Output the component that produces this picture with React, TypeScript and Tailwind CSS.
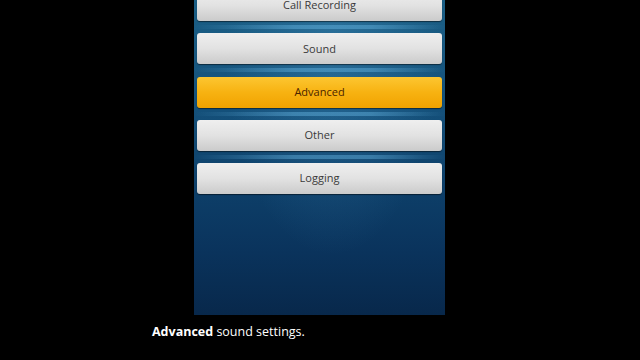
const ITEMS = [
  { label: "Call Recording", active: false },
  { label: "Sound", active: false },
  { label: "Advanced", active: true },
  { label: "Other", active: false },
  { label: "Logging", active: false },
];

export default function App() {
  return (
    <div className="w-[640px] h-[360px] bg-black overflow-hidden flex flex-col font-['Open_Sans',sans-serif]">
      <div className="ml-[194px] w-[251px] h-[315px] overflow-hidden relative bg-[linear-gradient(180deg,#1b5f86_0%,#14507a_35%,#0d3f69_60%,#0a335c_80%,#08284b_100%)]">
        <div className="absolute inset-0 bg-[radial-gradient(ellipse_at_55%_15%,rgba(90,170,220,0.25),transparent_55%)]" />
        <div className="relative flex flex-col gap-[12.3px] px-[3px] mt-[-10px]">
          {ITEMS.map((item, index) => (
            <div key={item.label} className="relative">
              {index < ITEMS.length - 1 && (
                <div className="absolute left-[-3px] right-[-3px] bottom-[-8px] h-[4px] bg-[linear-gradient(90deg,transparent,rgba(110,190,235,0.4)_40%,rgba(110,190,235,0.4)_70%,transparent)]" />
              )}
              <div
                className={
                  item.active
                    ? "relative h-[31px] rounded-[3px] flex items-center justify-center text-[11px] font-medium text-[#4a2300] bg-[linear-gradient(180deg,#fcc631_0%,#f7b211_50%,#f0a200_100%)] shadow-[0_1px_1px_rgba(0,0,0,0.5)]"
                    : "relative h-[31px] rounded-[3px] flex items-center justify-center text-[11px] font-medium text-[#3a3a3a] bg-[linear-gradient(180deg,#efefef_0%,#e2e2e2_50%,#cbcbcb_100%)] shadow-[0_1px_1px_rgba(0,0,0,0.5)]"
                }
              >
                {item.label}
              </div>
            </div>
          ))}
        </div>
      </div>
      <div className="pl-[152px] pt-[7px] text-[12.5px] text-white leading-[20px]">
        <span className="font-bold">Advanced</span> sound settings.
      </div>
    </div>
  );
}
